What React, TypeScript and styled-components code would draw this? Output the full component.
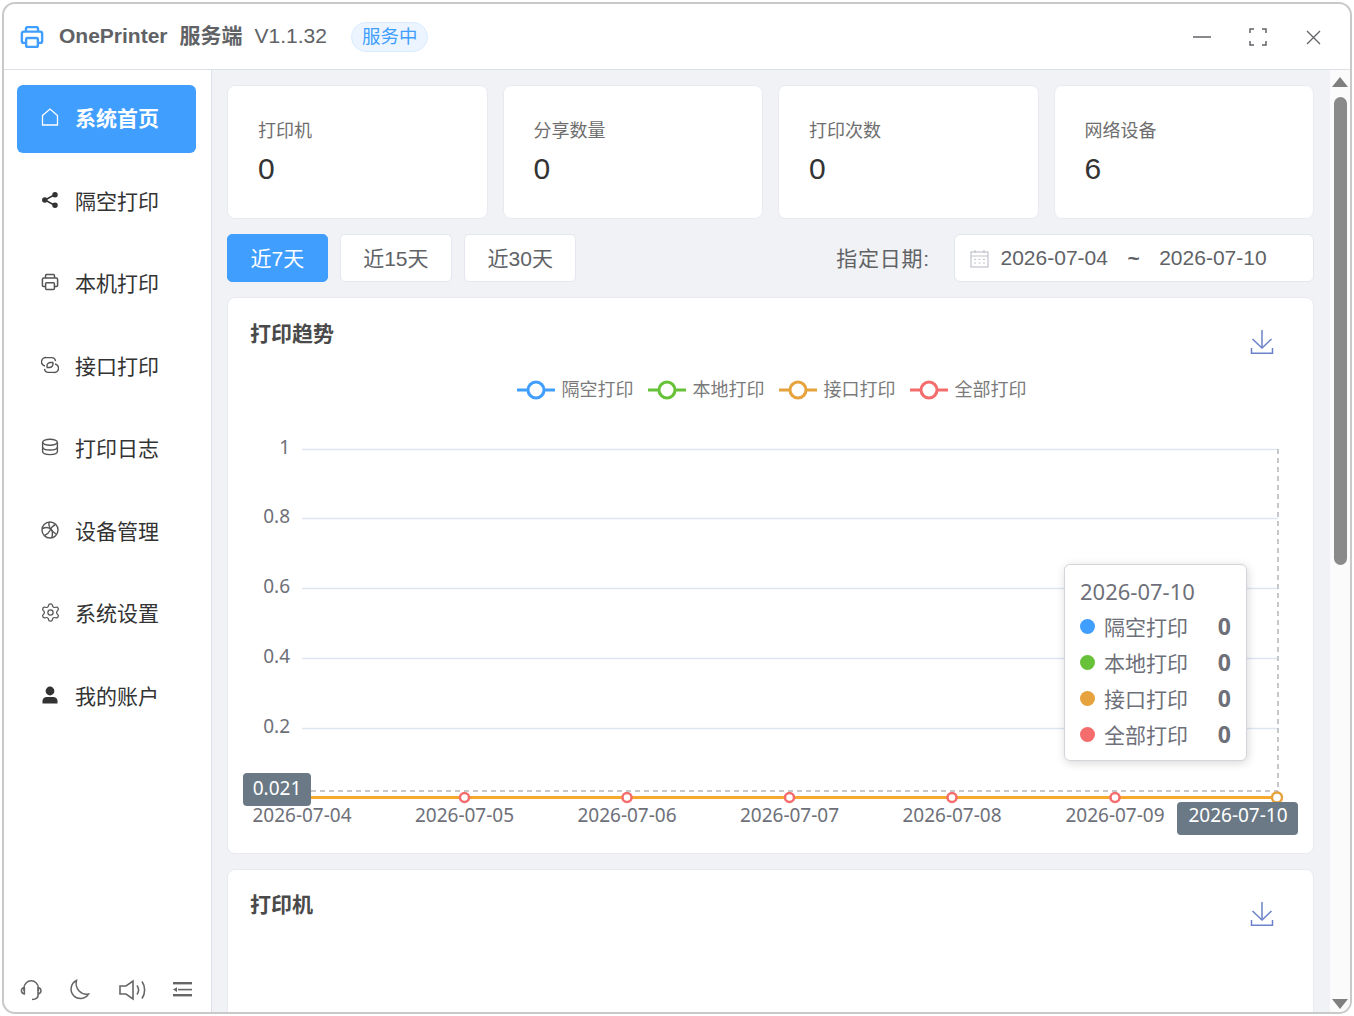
import React from "react";
import styled, { createGlobalStyle } from "styled-components";
import { Settings } from "lucide-react";

const GlobalStyle = createGlobalStyle`
  html, body {
    margin: 0;
    padding: 0;
    background: #fff;
    overflow: hidden;
  }
  body {
    font-family: "Liberation Sans", "Noto Sans CJK SC", sans-serif;
  }
  * {
    box-sizing: border-box;
  }
`;

const Frame = styled.div`
  width: 1350px;
  height: 1012px;
  margin: 2px 0 0 2px;
  border: 2px solid #c9c9c9;
  border-radius: 13px;
  background: #fff;
  display: flex;
  flex-direction: column;
  overflow: hidden;
`;

const TitleBar = styled.header`
  height: 66px;
  flex: none;
  display: flex;
  align-items: center;
  padding: 0 27px 0 16px;
  border-bottom: 1px solid #dcdfe6;
  color: #606266;
`;

const LogoMark = styled.span`
  color: #409eff;
  line-height: 0;
`;

const TitleText = styled.div`
  display: flex;
  align-items: baseline;
  gap: 12px;
  margin-left: 15px;
  padding-bottom: 1px;
  font-size: 21px;
  line-height: 30px;
`;

const AppName = styled.span`
  font-weight: 700;
`;

const StatusBadge = styled.span`
  margin-left: 24px;
  height: 30px;
  padding: 0 10px 3px;
  display: flex;
  align-items: center;
  border: 1px solid #d9ecff;
  border-radius: 15px;
  background: #ecf5ff;
  color: #409eff;
  font-size: 18.5px;
`;

const WindowButtons = styled.div`
  margin-left: auto;
  display: flex;
  align-items: center;
  gap: 35.5px;
  color: #606266;
`;

const Body = styled.div`
  flex: 1;
  min-height: 0;
  display: flex;
`;

const Sidebar = styled.aside`
  width: 208px;
  flex: none;
  border-right: 1px solid #dcdfe6;
  padding: 15px 15px 0 13px;
  display: flex;
  flex-direction: column;
`;

const NavList = styled.nav`
  display: flex;
  flex-direction: column;
  gap: 14.5px;
`;

const NavItem = styled.a<{ $active?: boolean }>`
  height: 68px;
  display: flex;
  align-items: center;
  gap: 16px;
  padding: 0 0 4px 24px;
  border-radius: 6px;
  font-size: 21px;
  font-weight: ${(p) => (p.$active ? 700 : 400)};
  color: ${(p) => (p.$active ? "#fff" : "#333")};
  background: ${(p) => (p.$active ? "#409eff" : "transparent")};
`;

const IconSlot = styled.span<{ $active?: boolean }>`
  width: 18px;
  height: 20px;
  flex: none;
  display: flex;
  align-items: center;
  justify-content: center;
  color: ${(p) => (p.$active ? "#fff" : "#555")};
  svg {
    flex: none;
  }
`;

const SideTools = styled.div`
  margin-top: auto;
  height: 34px;
  display: flex;
  align-items: flex-start;
  gap: 25px;
  padding-left: 2px;
  color: #666;
`;

const Main = styled.main`
  flex: 1;
  min-width: 0;
  background: #f1f2f5;
  padding: 15px 16px 0 15px;
  display: flex;
  flex-direction: column;
  gap: 15px;
  overflow: hidden;
`;

const StatRow = styled.section`
  display: grid;
  grid-template-columns: repeat(4, 1fr);
  gap: 15px;
  flex: none;
`;

const Panel = styled.div`
  background: #fff;
  border: 1px solid #e8eaf0;
  border-radius: 8px;
`;

const StatCard = styled(Panel)`
  height: 134px;
  padding: 32px 30px 0;
`;

const StatLabel = styled.div`
  font-size: 18px;
  line-height: 26px;
  color: #6e6e6e;
`;

const StatValue = styled.div`
  margin-top: 7px;
  font-size: 30px;
  line-height: 36px;
  color: #333;
`;

const FilterRow = styled.section`
  height: 48px;
  flex: none;
  display: flex;
  align-items: center;
  gap: 12px;
`;

const RangeButton = styled.button<{ $active?: boolean }>`
  height: 48px;
  padding: 0 22.5px 3px;
  border: 1px solid ${(p) => (p.$active ? "#409eff" : "#e4e7ed")};
  border-radius: 5px;
  background: ${(p) => (p.$active ? "#409eff" : "#fff")};
  color: ${(p) => (p.$active ? "#fff" : "#606266")};
  font-family: inherit;
  font-size: 21px;
`;

const DateLabel = styled.span`
  margin-left: auto;
  margin-right: 12px;
  padding-bottom: 2px;
  font-size: 21px;
  letter-spacing: 0.8px;
  color: #606266;
`;

const DatePicker = styled.div`
  width: 360px;
  height: 48px;
  display: flex;
  align-items: center;
  padding-left: 15px;
  background: #fff;
  border: 1px solid #e2e5ec;
  border-radius: 6px;
  font-size: 21px;
  color: #606266;
`;

const DateValue = styled.span`
  margin-left: 11.5px;
`;

const DateSep = styled.span`
  margin: 0 19.5px;
  font-weight: 700;
`;

const ChartPanel = styled(Panel)`
  flex: none;
  height: 557px;
`;

const TablePanel = styled(Panel)`
  flex: none;
  height: 300px;
`;

const PanelHead = styled.div<{ $top: number }>`
  height: 72px;
  display: flex;
  align-items: flex-start;
  justify-content: space-between;
  padding: ${(p) => p.$top}px 39px 0 22px;
`;

const PanelTitle = styled.h3`
  margin: 0;
  font-size: 21px;
  line-height: 30px;
  font-weight: 700;
  color: #4a4a4a;
`;

const DownloadBtn = styled.span<{ $offset: number }>`
  display: block;
  margin-top: ${(p) => p.$offset}px;
  color: #6b82c9;
  line-height: 0;
`;

const Legend = styled.div`
  height: 36px;
  margin-top: 2px;
  margin-bottom: -1px;
  display: flex;
  align-items: center;
  justify-content: center;
  gap: 14px;
  padding-left: 2px;
`;

const LegendItem = styled.span`
  display: flex;
  align-items: center;
  gap: 7px;
  font-size: 18px;
  color: #7a7a7a;
`;

const LegendLabel = styled.span`
  padding-bottom: 5px;
`;

const ChartArea = styled.div`
  position: relative;
  width: 1085px;
  height: 420px;
  margin-top: 23px;
`;

const ChartSvg = styled.svg`
  display: block;
  font-family: "Noto Sans", "Noto Sans CJK SC", sans-serif;
`;

const Tooltip = styled.div`
  position: absolute;
  left: 836px;
  top: 134px;
  width: 183px;
  height: 197px;
  padding: 10px 15px 0;
  background: #fff;
  border: 1px solid #d4d5db;
  border-radius: 6px;
  box-shadow: 1px 2px 10px rgba(0, 0, 0, 0.16);
  font-family: "Noto Sans", "Noto Sans CJK SC", sans-serif;
  color: #6e7079;
`;

const TooltipTitle = styled.div`
  font-size: 22px;
  line-height: 32px;
  margin-bottom: 1px;
`;

const TooltipRow = styled.div`
  height: 36px;
  display: flex;
  align-items: center;
  font-size: 21px;
`;

const Dot = styled.i<{ $color: string }>`
  width: 15px;
  height: 15px;
  border-radius: 50%;
  background: ${(p) => p.$color};
  margin-right: 9px;
`;

const TooltipValue = styled.b`
  margin-left: auto;
  font-size: 23px;
`;

const ScrollTrack = styled.div`
  width: 20px;
  flex: none;
  background: #fbfbfb;
  display: flex;
  flex-direction: column;
  align-items: center;
  padding: 7px 0 3px;
`;

const ScrollThumb = styled.div`
  width: 13px;
  height: 468px;
  margin-top: 10px;
  border-radius: 7px;
  background: #8a8a8a;
`;

const ScrollDown = styled.div`
  margin-top: auto;
  line-height: 0;
`;

const HomeIcon = () => (
  <svg width="18" height="20" viewBox="0 0 18 20" fill="none" stroke="currentColor" strokeWidth="1.3">
    <path d="M1.5 8.5 9 2l7.5 6.5V18h-15z" />
  </svg>
);

const ShareIcon = () => (
  <svg width="18" height="18" viewBox="0 0 18 18" fill="#333" stroke="#333" strokeWidth="1.5">
    <path d="M14 3.5 4 9l10 5.5" fill="none" />
    <circle cx="14" cy="3.8" r="2" />
    <circle cx="3.8" cy="9" r="2" />
    <circle cx="14" cy="14.2" r="2" />
  </svg>
);

const PrinterIcon = ({ size = 18, sw = 1.5 }: { size?: number; sw?: number }) => (
  <svg width={size} height={size} viewBox="0 0 18 18" fill="none" stroke="currentColor" strokeWidth={sw}>
    <path d="M4.5 5V2.8c0-.7.5-1.2 1.2-1.2h6.6c.7 0 1.2.5 1.2 1.2V5" />
    <path d="M4.2 13.4H2.6c-.7 0-1.2-.5-1.2-1.2V6.4c0-.8.6-1.4 1.4-1.4h12.4c.8 0 1.4.6 1.4 1.4v5.8c0 .7-.5 1.2-1.2 1.2h-1.6" />
    <rect x="4.6" y="9.8" width="8.8" height="6.6" rx="1" />
  </svg>
);

const LinkIcon = () => (
  <svg width="18" height="18" viewBox="0 0 18 18" fill="none" stroke="#555" strokeWidth="1.4">
    <path d="M4 10a4.2 4.2 0 0 1 1.5-8.4h5a4 4 0 0 1 4 3.5" />
    <path d="M14 8a4.2 4.2 0 0 1-1.5 8.4h-5a4 4 0 0 1-4-3.5" />
    <path d="M6 11v-1a3.5 3.5 0 0 1 3.5-3.5h3" />
    <path d="M12 7v1a3.5 3.5 0 0 1-3.5 3.5h-3" />
  </svg>
);

const DatabaseIcon = () => (
  <svg width="18" height="18" viewBox="0 0 18 18" fill="none" stroke="#555" strokeWidth="1.4">
    <ellipse cx="9" cy="4.2" rx="7.4" ry="3" />
    <path d="M1.6 4.2v9.4c0 1.7 3.3 3 7.4 3s7.4-1.3 7.4-3V4.2" />
    <path d="M1.6 9c0 1.7 3.3 3 7.4 3s7.4-1.3 7.4-3" />
  </svg>
);

const BallIcon = () => (
  <svg width="18" height="18" viewBox="0 0 18 18" fill="none" stroke="#555" strokeWidth="1.4">
    <circle cx="9" cy="9" r="8" />
    <path d="M8 1.2C7 5 8.5 8.5 15.6 13.5" />
    <path d="M1.4 7.5c3.5-1.5 7-1.3 9 1.2 1.3 1.8 1.3 4.5.4 8" />
    <path d="M14.5 3.3C11.5 5 9.5 8 9 9.5c-1 2-3 4-5.5 5" />
  </svg>
);

const UserIcon = () => (
  <svg width="18" height="18" viewBox="0 0 18 18" fill="#333">
    <circle cx="9" cy="5" r="4.4" />
    <path d="M1.5 17.5v-2.6c0-2.4 2-3.9 4.4-3.9h6.2c2.4 0 4.4 1.5 4.4 3.9v2.600z" />
  </svg>
);

const HeadsetIcon = () => (
  <svg width="24" height="24" viewBox="0 0 24 24" fill="none" stroke="currentColor" strokeWidth="1.5">
    <path d="M5 13V10a7.2 7.2 0 0 1 14.4 0v3" />
    <path d="M5.4 9.5c-2 .3-3 1.8-3 3.2s1 2.8 3 3.2zM19 9.5c2 .3 3 1.8 3 3.2s-1 2.8-3 3.2z" />
    <path d="M19.3 16c0 3.5-2.5 5.5-6.3 5.5" />
  </svg>
);

const MoonIcon = () => (
  <svg width="24" height="24" viewBox="1 0 24 24" fill="none" stroke="currentColor" strokeWidth="1.5">
    <path d="M9.5 2.5C3.5 5.5 2.5 13 6.5 17.5c4 4.3 11.500 4 15-1.500-7 1.500-14-5-12-13.500z" />
  </svg>
);

const SpeakerIcon = () => (
  <svg width="30" height="24" viewBox="-1 0 30 24" fill="none" stroke="currentColor" strokeWidth="1.6">
    <path d="M2 8h6l7-5v18l-7-5H2z" />
    <path d="M19 7.5c2 2.8 2 6.2 0 9" />
    <path d="M24 3.5c3.5 5 3.5 12 0 17" />
  </svg>
);

const FoldIcon = () => (
  <svg width="24" height="24" viewBox="2 0 24 24" fill="#666" stroke="none">
    <rect x="3" y="4" width="19" height="2.4" />
    <rect x="8" y="10.8" width="14" height="1.6" />
    <path d="M3 11.6 7 9.2V14z" />
    <rect x="3" y="16" width="19" height="2.4" />
  </svg>
);

const DownloadIcon = () => (
  <svg width="24" height="26" viewBox="0 0 24 26" fill="none" stroke="currentColor" strokeWidth="1.5">
    <path d="M12 1v18" />
    <path d="M2.5 10 12 19l9.5-9" />
    <path d="M1.5 19v5.2h21V19" />
  </svg>
);

const CalendarIcon = () => (
  <svg width="19" height="19" viewBox="0 0 19 19" fill="none" stroke="#c0c4cc" strokeWidth="1.2">
    <rect x="1" y="3" width="17" height="15" />
    <path d="M1 7h17M5 1v3M14 1v3" />
    <path d="M4 10.5h2M8.5 10.5h2M13 10.5h2M4 14h2M8.5 14h2M13 14h2" />
  </svg>
);

const navItems: { label: string; icon: React.ReactNode }[] = [
  { label: "隔空打印", icon: <ShareIcon /> },
  { label: "本机打印", icon: <PrinterIcon /> },
  { label: "接口打印", icon: <LinkIcon /> },
  { label: "打印日志", icon: <DatabaseIcon /> },
  { label: "设备管理", icon: <BallIcon /> },
  { label: "系统设置", icon: <Settings size={21} strokeWidth={1.4} /> },
  { label: "我的账户", icon: <UserIcon /> },
];

const stats = [
  { label: "打印机", value: 0 },
  { label: "分享数量", value: 0 },
  { label: "打印次数", value: 0 },
  { label: "网络设备", value: 6 },
];

const series = [
  { name: "隔空打印", color: "#409eff" },
  { name: "本地打印", color: "#67c23a" },
  { name: "接口打印", color: "#e6a23c" },
  { name: "全部打印", color: "#f56c6c" },
];

const yTicks = [
  { label: "1", y: 449 },
  { label: "0.8", y: 518 },
  { label: "0.6", y: 588 },
  { label: "0.4", y: 658 },
  { label: "0.2", y: 728 },
];

const xTicks = [
  { label: "2026-07-04", x: 302 },
  { label: "2026-07-05", x: 464.5 },
  { label: "2026-07-06", x: 627 },
  { label: "2026-07-07", x: 789.5 },
  { label: "2026-07-08", x: 952 },
  { label: "2026-07-09", x: 1115 },
];

const Chart = () => (
  <ChartSvg width="1085" height="420" viewBox="228 430 1085 420">
    {yTicks.map((t) => (
      <g key={t.label}>
        <line x1="302" x2="1278" y1={t.y + 0.5} y2={t.y + 0.5} stroke="#e0e6f1" strokeWidth="1.5" />
        <text x="290" y={t.y + 4.5} textAnchor="end" fontSize="19" fill="#6e7079">
          {t.label}
        </text>
      </g>
    ))}
    <line x1="1278" x2="1278" y1="449" y2="798" stroke="#b4b6bc" strokeWidth="1.5" strokeDasharray="5 4" />
    <line x1="302" x2="1278" y1="791" y2="791" stroke="#b4b6bc" strokeWidth="1.5" strokeDasharray="5 4" />
    <line x1="302" x2="1278" y1="797.5" y2="797.5" stroke="#f7a92f" strokeWidth="3" />
    {xTicks.map((t) => (
      <g key={t.label}>
        {t.x > 302 && <circle cx={t.x} cy="797.5" r="4.5" fill="#fff" stroke="#f56c6c" strokeWidth="2.5" />}
        <text x={t.x} y="822" textAnchor="middle" fontSize="19" fill="#6e7079">
          {t.label}
        </text>
      </g>
    ))}
    <circle cx="1277" cy="797.5" r="5" fill="#fff" stroke="#e6a23c" strokeWidth="2.5" />
    <rect x="243" y="773" width="68" height="33" rx="4" fill="#6a7985" />
    <text x="277" y="794.5" textAnchor="middle" fontSize="19" fill="#fff">
      0.021
    </text>
    <rect x="1177" y="802" width="121" height="33" rx="4" fill="#6a7985" />
    <text x="1238" y="822" textAnchor="middle" fontSize="19" fill="#fff">
      2026-07-10
    </text>
  </ChartSvg>
);

export default function App() {
  return (
    <>
      <GlobalStyle />
      <Frame>
        <TitleBar>
          <LogoMark>
            <PrinterIcon size={24} sw={1.8} />
          </LogoMark>
          <TitleText>
            <AppName>OnePrinter</AppName>
            <AppName>服务端</AppName>
            <span>V1.1.32</span>
          </TitleText>
          <StatusBadge>服务中</StatusBadge>
          <WindowButtons>
            <svg width="20" height="20" viewBox="0 0 20 20" stroke="currentColor" strokeWidth="1.3">
              <path d="M1 10h18" />
            </svg>
            <svg width="20" height="20" viewBox="0 0 20 20" fill="none" stroke="currentColor" strokeWidth="1.5">
              <path d="M2 6V2h4M14 2h4v4M18 14v4h-4M6 18H2v-4" />
            </svg>
            <svg width="20" height="20" viewBox="0 0 20 20" stroke="currentColor" strokeWidth="1.3">
              <path d="m4 4 13 13M17 4 4 17" />
            </svg>
          </WindowButtons>
        </TitleBar>
        <Body>
          <Sidebar>
            <NavList>
              <NavItem $active>
                <IconSlot $active>
                  <HomeIcon />
                </IconSlot>
                系统首页
              </NavItem>
              {navItems.map((item) => (
                <NavItem key={item.label}>
                  <IconSlot>{item.icon}</IconSlot>
                  {item.label}
                </NavItem>
              ))}
            </NavList>
            <SideTools>
              <HeadsetIcon />
              <MoonIcon />
              <SpeakerIcon />
              <FoldIcon />
            </SideTools>
          </Sidebar>
          <Main>
            <StatRow>
              {stats.map((s) => (
                <StatCard key={s.label}>
                  <StatLabel>{s.label}</StatLabel>
                  <StatValue>{s.value}</StatValue>
                </StatCard>
              ))}
            </StatRow>
            <FilterRow>
              <RangeButton $active>近7天</RangeButton>
              <RangeButton>近15天</RangeButton>
              <RangeButton>近30天</RangeButton>
              <DateLabel>指定日期:</DateLabel>
              <DatePicker>
                <CalendarIcon />
                <DateValue>2026-07-04</DateValue>
                <DateSep>~</DateSep>
                <span>2026-07-10</span>
              </DatePicker>
            </FilterRow>
            <ChartPanel>
              <PanelHead $top={21}>
                <PanelTitle>打印趋势</PanelTitle>
                <DownloadBtn $offset={10}>
                  <DownloadIcon />
                </DownloadBtn>
              </PanelHead>
              <Legend>
                {series.map((s) => (
                  <LegendItem key={s.name}>
                    <svg width="38" height="20" viewBox="0 0 38 20" fill="#fff" stroke={s.color} strokeWidth="3">
                      <path d="M0 10h38" />
                      <circle cx="19" cy="10" r="8" />
                    </svg>
                    <LegendLabel>{s.name}</LegendLabel>
                  </LegendItem>
                ))}
              </Legend>
              <ChartArea>
                <Chart />
                <Tooltip>
                  <TooltipTitle>2026-07-10</TooltipTitle>
                  {series.map((s) => (
                    <TooltipRow key={s.name}>
                      <Dot $color={s.color} />
                      {s.name}
                      <TooltipValue>0</TooltipValue>
                    </TooltipRow>
                  ))}
                </Tooltip>
              </ChartArea>
            </ChartPanel>
            <TablePanel>
              <PanelHead $top={20}>
                <PanelTitle>打印机</PanelTitle>
                <DownloadBtn $offset={11}>
                  <DownloadIcon />
                </DownloadBtn>
              </PanelHead>
            </TablePanel>
          </Main>
          <ScrollTrack>
            <svg width="16" height="10" viewBox="0 0 16 10" fill="#7f7f7f">
              <path d="M8 0l8 10H0z" />
            </svg>
            <ScrollThumb />
            <ScrollDown>
              <svg width="16" height="10" viewBox="0 0 16 10" fill="#7f7f7f">
                <path d="M0 0h16L8 10z" />
              </svg>
            </ScrollDown>
          </ScrollTrack>
        </Body>
      </Frame>
    </>
  );
}
